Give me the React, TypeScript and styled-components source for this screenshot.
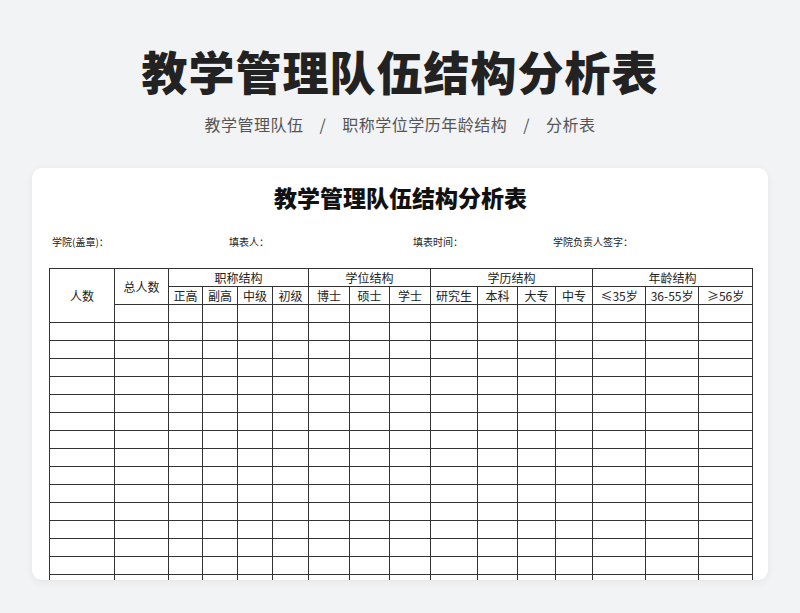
import React from 'react';
import styled, { createGlobalStyle } from 'styled-components';

const Global = createGlobalStyle`
  html, body { margin: 0; padding: 0; background: #f2f3f5; }
  body { font-family: "Noto Sans CJK SC", "Noto Sans", sans-serif; color: #222; }
`;

const Page = styled.div`
  height: 613px;
  overflow: hidden;
  display: flex;
  flex-direction: column;
  align-items: center;
`;

const Title = styled.h1`
  margin: 40px 0 0;
  font-size: 46px;
  line-height: 60px;
  font-weight: 900;
  color: #222;
  letter-spacing: 1px;
`;

const Crumbs = styled.div`
  margin-top: 12px;
  font-size: 16px;
  line-height: 24px;
  color: #555;
  display: flex;
  gap: 16px;
  letter-spacing: 0.5px;
`;

const Card = styled.div`
  margin-top: 32px;
  width: 736px;
  height: 412px;
  background: #fff;
  border-radius: 10px;
  box-shadow: 0 2px 10px rgba(0, 0, 0, 0.06);
  overflow: hidden;
  box-sizing: border-box;
  padding: 12px 16px 0 17px;
`;

const SheetTitle = styled.h2`
  margin: 0;
  text-align: center;
  font-size: 23px;
  line-height: 34px;
  font-weight: 900;
  color: #111;
`;

const InfoRow = styled.div`
  margin-top: 21px;
  display: grid;
  grid-template-columns: 177px 184px 140px auto;
  padding-left: 3px;
  font-size: 10px;
  line-height: 14px;
  color: #222;
`;

const Table = styled.table`
  margin-top: 19px;
  border-collapse: collapse;
  table-layout: fixed;
  width: 704px;
  font-size: 12px;
  color: #222;
`;

const Cell = styled.td<{ $h?: number }>`
  border: 1px solid #333;
  height: ${p => p.$h ?? 17}px;
  padding: 0;
  text-align: center;
  line-height: 16px;
  white-space: nowrap;
`;

const widths = [65, 54, 34, 35, 35, 36, 41, 40, 41, 47, 40, 38, 37, 53, 53, 54];
const groups = [
  { name: '职称结构', items: ['正高', '副高', '中级', '初级'] },
  { name: '学位结构', items: ['博士', '硕士', '学士'] },
  { name: '学历结构', items: ['研究生', '本科', '大专', '中专'] },
  { name: '年龄结构', items: ['≤35岁', '36-55岁', '≥56岁'] },
];

export default function App() {
  return (
    <Page>
      <Global />
      <Title>教学管理队伍结构分析表</Title>
      <Crumbs>
        <span>教学管理队伍</span><span>/</span>
        <span>职称学位学历年龄结构</span><span>/</span>
        <span>分析表</span>
      </Crumbs>
      <Card>
        <SheetTitle>教学管理队伍结构分析表</SheetTitle>
        <InfoRow>
          <span>学院(盖章)：</span>
          <span>填表人：</span>
          <span>填表时间：</span>
          <span>学院负责人签字：</span>
        </InfoRow>
        <Table>
          <colgroup>
            {widths.map((w, i) => <col key={i} style={{ width: w }} />)}
          </colgroup>
          <tbody>
            <tr>
              <Cell rowSpan={3}>人数</Cell>
              <Cell rowSpan={2}>总人数</Cell>
              {groups.map(g => <Cell key={g.name} colSpan={g.items.length}>{g.name}</Cell>)}
            </tr>
            <tr>
              {groups.flatMap(g => g.items).map(t => <Cell key={t}>{t}</Cell>)}
            </tr>
            <tr>
              {widths.slice(1).map((_, i) => <Cell key={i} />)}
            </tr>
            {Array.from({ length: 15 }).map((_, r) => (
              <tr key={r}>
                {widths.map((_, i) => <Cell key={i} />)}
              </tr>
            ))}
          </tbody>
        </Table>
      </Card>
    </Page>
  );
}
